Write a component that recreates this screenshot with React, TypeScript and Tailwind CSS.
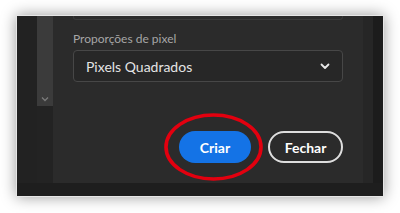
import React from "react";

export default function App() {
  return (
    <div className="w-[400px] h-[213px] bg-white overflow-hidden pt-[15px] pl-[16px]" style={{ fontFamily: 'Lato, "Noto Sans", sans-serif' }}>
      <div className="w-[368px] h-[182px] flex flex-col bg-[#1e1e1e] border border-[#e6e6e6] shadow-[0_0_14px_rgba(0,0,0,0.4)]">
        <div className="flex h-[167px]">
          <div className="w-[20px] bg-[#222222]" />
          <div className="w-[16px] flex flex-col bg-[#232323]">
            <div className="h-[90px] bg-[#3b3b3b] flex flex-col justify-end items-center pb-[4px]">
              <svg width="8" height="6" viewBox="0 0 8 6" fill="none" stroke="#7a7a7a" strokeWidth="1.3">
                <path d="M1 1.5 L4 4.5 L7 1.5" />
              </svg>
            </div>
          </div>
          <div className="w-[310px] bg-[#2b2b2b] flex flex-col px-[20px]">
            <div className="h-[4px] border-x border-b border-[#3a3a3a] rounded-b-[3px]" />
            <div className="mt-[11px] text-[12px] leading-[15px] text-[#a6a6a6]">Proporções de pixel</div>
            <div className="mt-[4px] h-[32px] rounded-[4px] border border-[#474747] bg-[#272727] flex items-center justify-between pl-[12px] pr-[12px]">
              <span className="text-[14px] text-[#e4e4e4]">Pixels Quadrados</span>
              <svg width="10" height="7" viewBox="0 0 10 7" fill="none" stroke="#e8e8e8" strokeWidth="1.8" strokeLinecap="round" strokeLinejoin="round">
                <path d="M1.5 1.5 L5 5 L8.5 1.5" />
              </svg>
            </div>
            <div className="mt-[49px] flex justify-end gap-[17px]">
              <div className="relative">
                <button className="w-[72px] h-[32px] rounded-full bg-[#1473e6] text-white text-[14px] font-bold">Criar</button>
                <svg className="absolute left-[-15px] top-[-18px] pointer-events-none" width="99" height="68" viewBox="0 0 99 68" fill="none">
                  <ellipse cx="49.5" cy="34" rx="47.5" ry="32" stroke="#e3000f" strokeWidth="3.6" />
                </svg>
              </div>
              <button className="w-[75px] h-[32px] rounded-full border-2 border-[#dedede] text-white text-[14px] font-bold">Fechar</button>
            </div>
          </div>
          <div className="w-[10px] bg-[#262626]" />
          <div className="flex-1 bg-[#1c1c1c]" />
        </div>
        <div className="flex-1 bg-[#1e1e1e]" />
      </div>
    </div>
  );
}
